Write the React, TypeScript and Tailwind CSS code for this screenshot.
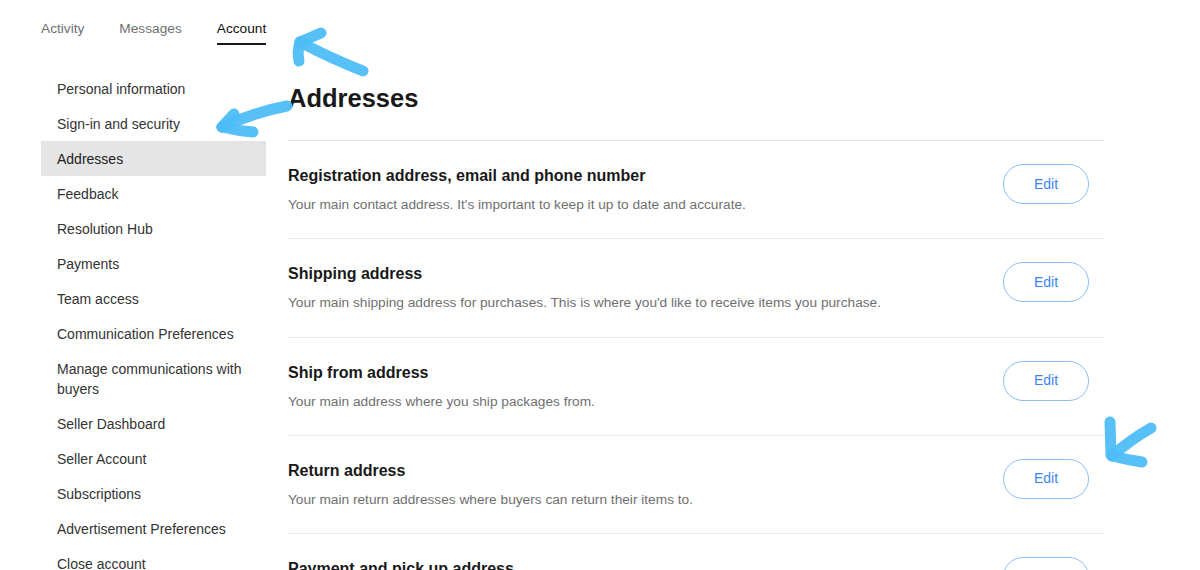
import React from "react";

const sideItems = [
  "Personal information",
  "Sign-in and security",
  "Addresses",
  "Feedback",
  "Resolution Hub",
  "Payments",
  "Team access",
  "Communication Preferences",
  "Manage communications with buyers",
  "Seller Dashboard",
  "Seller Account",
  "Subscriptions",
  "Advertisement Preferences",
  "Close account",
];

const sections = [
  {
    title: "Registration address, email and phone number",
    desc: "Your main contact address. It's important to keep it up to date and accurate.",
  },
  {
    title: "Shipping address",
    desc: "Your main shipping address for purchases. This is where you'd like to receive items you purchase.",
  },
  {
    title: "Ship from address",
    desc: "Your main address where you ship packages from.",
  },
  {
    title: "Return address",
    desc: "Your main return addresses where buyers can return their items to.",
  },
  {
    title: "Payment and pick up address",
    desc: "Your address for payments and pick up.",
  },
];

export default function App() {
  return (
    <div
      className="relative w-[1200px] h-[570px] overflow-hidden bg-white"
      style={{ fontFamily: '"Liberation Sans", Arial, sans-serif' }}
    >
      {/* Tabs */}
      <div className="flex gap-[35px] pl-[41px] pt-[19px] text-[13.7px] leading-5">
        <div className="text-[#707070] pb-[6px]">Activity</div>
        <div className="text-[#707070] pb-[6px]">Messages</div>
        <div className="text-[#111] pb-[4px] border-b-2 border-[#191919]">Account</div>
      </div>

      <div className="flex pt-[26px]">
        {/* Sidebar */}
        <div className="ml-[41px] w-[225px] flex flex-col text-[14px] leading-5 text-[#333]">
          {sideItems.map((s) => (
            <div
              key={s}
              className={
                "pl-[16px] pr-[10px] py-[7.5px] " +
                (s === "Addresses" ? "bg-[#e5e5e5] text-[#222]" : "")
              }
            >
              {s}
            </div>
          ))}
        </div>

        {/* Main */}
        <div className="ml-[22px] w-[816px] pt-[11px]">
          <h1 className="text-[25.5px] leading-8 font-bold text-[#191919] pb-[26px] border-b border-[#e5e5e5]">
            Addresses
          </h1>
          {sections.map((s) => (
            <div
              key={s.title}
              className="flex items-start justify-between pt-[24px] pb-[23.25px] pr-[15px] border-b border-[#ececec]"
            >
              <div>
                <div className="text-[16px] leading-[22px] font-bold text-[#191919]">{s.title}</div>
                <div className="mt-[8px] text-[13.7px] leading-5 text-[#707070]">{s.desc}</div>
              </div>
              <button className="-mt-[1px] w-[86px] h-[40px] rounded-full border border-[#8dbcf7] text-[#3b86f0] text-[14px] bg-white">
                Edit
              </button>
            </div>
          ))}
        </div>
      </div>

      {/* Hand-drawn annotation arrows */}
      <svg
        className="absolute inset-0 pointer-events-none"
        width="1200"
        height="570"
        viewBox="0 0 1200 570"
      >
        <g
          stroke="#4dbdf7"
          strokeOpacity="0.95"
          strokeWidth="11"
          strokeLinecap="round"
          strokeLinejoin="round"
          fill="none"
        >
          <path d="M300 42 Q330 58 363 71" />
          <path d="M300 42 L321 33" />
          <path d="M300 42 Q297 52 299 61" />

          <path d="M222 127 Q255 112 287 106" />
          <path d="M222 127 L234 114" />
          <path d="M222 127 Q238 131 253 132" />

          <path d="M1110 422 L1111 455" />
          <path d="M1112 456 Q1130 440 1151 428" />
          <path d="M1112 456 Q1128 460 1142 462" />
        </g>
      </svg>
    </div>
  );
}
